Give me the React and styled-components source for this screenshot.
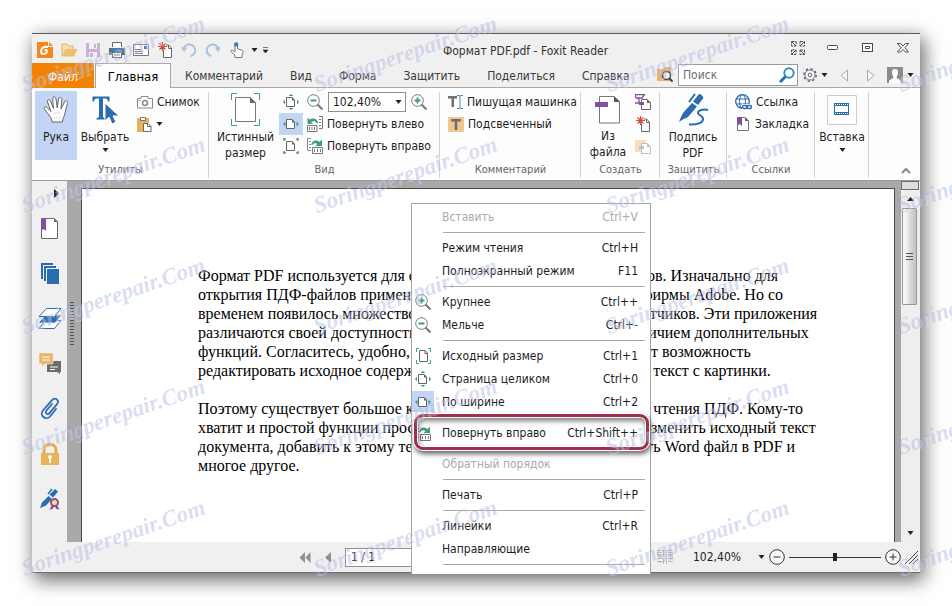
import { useState } from 'react'

import styled, { createGlobalStyle, css } from 'styled-components'

const GlobalStyle = createGlobalStyle`
  *, *::before, *::after {
    box-sizing: border-box;
  }

  body {
    margin: 0;
    background: #fff;
    font-family: 'DejaVu Sans Condensed', 'Noto Sans', sans-serif;
    font-size: 12px;
    line-height: 16px;
    color: #1e1e1e;
  }

  button, input, select {
    font: inherit;
    color: inherit;
    margin: 0;
    padding: 0;
    border: 0;
    border-radius: 0;
    background: none;
    outline: none;
  }

  svg {
    display: block;
    flex: none;
  }
`

const Desktop = styled.div`
  position: relative;
  display: flex;
  min-height: 100vh;
  padding: 33px 32px;
  overflow: hidden;
`

const Window = styled.main`
  position: relative;
  display: flex;
  flex-direction: column;
  flex: 1;
  min-width: 0;
  background: #f0f0f0;
  border-top: 1px solid #5f5a63;
  border-bottom: 1px solid #6d6a70;
  box-shadow: 3px 6px 18px 1px rgba(0, 0, 0, 0.6);
`

const TitleBar = styled.header`
  display: flex;
  align-items: flex-end;
  height: 29px;
`

const QuickAccess = styled.div`
  display: flex;
  align-items: center;
  padding-left: 1px;
`

const QuickButton = styled.button`
  display: flex;
  align-items: center;
  justify-content: center;
  width: ${props => (props.$narrow ? '11px' : '24px')};
  height: 26px;
`

const WindowTitle = styled.h1`
  flex: 1;
  margin: 0;
  font-size: 12px;
  font-weight: 400;
  line-height: 24px;
  text-align: center;
  color: #333;
`

const WindowButton = styled.button`
  display: flex;
  align-items: center;
  justify-content: center;
  width: 35px;
  height: 30px;
`

const TabBar = styled.nav`
  display: flex;
  height: 25px;
  border-bottom: 1px solid #a8a8a8;
`

const Tab = styled.button`
  height: 24px;
  padding: 2px 13px 0 14px;
  white-space: nowrap;
  color: #3a3a3a;

  ${props =>
    props.$file &&
    css`
      width: 62px;
      height: 25px;
      padding: 2px 0 0;
      margin-right: 1px;
      color: #fff;
      background: #f28200;
    `}

  ${props =>
    props.$active &&
    css`
      width: 76px;
      height: 25px;
      padding: 1px 0 0;
      font-size: 13px;
      color: #000;
      background: #fdfdfd;
      border: 1px solid #a8a8a8;
      border-bottom: 0;
    `}
`

const TabTools = styled.div`
  display: flex;
  align-items: center;
  gap: 5px;
  margin-left: auto;
  padding-right: 6px;
`

const SearchBox = styled.label`
  display: flex;
  align-items: center;
  width: 120px;
  height: 22px;
  padding: 0 2px 0 4px;
  background: #fff;
  border: 1px solid #9b9b9b;
`

const SearchInput = styled.input`
  flex: 1;
  min-width: 0;

  &::placeholder {
    color: #707070;
    opacity: 1;
  }
`

const IconButton = styled.button`
  display: flex;
  align-items: center;
  justify-content: center;
  gap: 4px;
  height: 22px;
  min-width: ${props => props.$width || 16}px;
  background: ${props => (props.$active ? '#c3d5f4' : 'none')};
`

const Ribbon = styled.section`
  display: flex;
  height: 92px;
  background: #fdfdfd;
`

const Group = styled.div`
  display: flex;
  flex-direction: column;
  flex: none;
  width: ${props => props.$width}px;
  padding-top: 3px;
  background: linear-gradient(#d2d2d2, #d2d2d2) right 4px / 1px 86px no-repeat;
`

const GroupBody = styled.div`
  display: flex;
  flex: 1;
  gap: ${props => props.$gap || 4}px;
  padding: 0 4px 0 ${props => props.$left || 6}px;
`

const GroupLabel = styled.div`
  height: 18px;
  line-height: 16px;
  font-size: 11px;
  text-align: center;
  color: #666;
`

const BigButton = styled.button`
  display: flex;
  flex-direction: column;
  align-items: center;
  gap: 3px;
  width: ${props => props.$width}px;
  height: 69px;
  padding-top: 2px;
  line-height: 16px;
  white-space: pre-line;
  background: ${props => (props.$active ? '#c3d5f4' : 'none')};
`

const BigIcon = styled.span`
  display: flex;
  align-items: center;
  justify-content: center;
  height: 33px;
`

const Stack = styled.div`
  display: flex;
  flex-direction: column;
  padding-left: ${props => props.$indent || 0}px;
`

const Row = styled.div`
  display: flex;
  align-items: center;
  gap: 5px;
  height: 22px;
`

const RowButton = styled.button`
  display: flex;
  align-items: center;
  gap: 4px;
  height: 22px;
  white-space: nowrap;
`

const ZoomSelect = styled.select`
  width: ${props => props.$width}px;
  height: 20px;
  padding-left: ${props => (props.$boxed ? '4px' : '16px')};
  appearance: none;
  background: ${props => (props.$boxed ? '#fff' : 'none')};
  border: ${props => (props.$boxed ? '1px solid #8f8f8f' : '0')};
`

const SelectWrap = styled.span`
  display: flex;
  align-items: center;

  svg {
    margin-left: ${props => (props.$boxed ? '-11px' : '-7px')};
    margin-right: ${props => (props.$boxed ? '4px' : '0')};
    pointer-events: none;
  }
`

const Collapse = styled.button`
  align-self: flex-end;
  margin-left: auto;
  padding: 6px 9px;
`

const Workspace = styled.div`
  display: flex;
  flex: 1;
  background: #a9a9a9;
  border-top: 1px solid #9a9a9a;
`

const SideBar = styled.aside`
  display: flex;
  flex-direction: column;
  width: 35px;
  background: #f0f0f0;
`

const SideButton = styled.button`
  display: flex;
  align-items: center;
  justify-content: center;
  height: ${props => (props.$toggle ? '25px' : '45px')};
  padding-left: ${props => (props.$toggle ? '14px' : '0')};
`

const Splitter = styled.div`
  display: flex;
  align-items: flex-start;
  justify-content: center;
  width: 14px;
  padding: 120px 5px 0 0;
`

const SplitterDots = styled.div`
  width: 4px;
  height: 44px;
  background: radial-gradient(#555 40%, transparent 45%) 0 0 / 2px 3px;
`

const Page = styled.article`
  flex: 1;
  min-width: 0;
  margin: 7px 6px 0 0;
  padding: 77px 60px 0 116px;
  background: #fff;
  border: 1px solid #4a4a4a;
  border-bottom: 0;
  font-family: 'Liberation Serif', serif;
  font-size: 16px;
  line-height: 19px;
  color: #000;
  overflow: hidden;
`

const Paragraph = styled.p`
  margin: 0 0 19px;
`

const Line = styled.span`
  display: block;
  white-space: nowrap;
`

const ScrollBar = styled.div`
  display: flex;
  flex-direction: column;
  width: 19px;
  padding-right: 1px;
  background: #eee;
`

const ScrollSplit = styled.div`
  height: 9px;
  background: #ddd;
  border: 1px solid #6c6c6c;
`

const ScrollArrow = styled.button`
  display: flex;
  align-items: center;
  justify-content: center;
  height: 18px;
`

const ScrollTrack = styled.div`
  flex: 1;
`

const ScrollThumb = styled.div`
  display: flex;
  align-items: center;
  justify-content: center;
  height: 97px;
  margin: 0 2px 0 1px;
  background: linear-gradient(90deg, #f5f5f5 20%, #d6d6d8 60%, #c2c2c6);
  border: 1px solid #979797;
  border-radius: 1px;
`

const StatusBar = styled.footer`
  display: flex;
  align-items: center;
  height: 30px;
  padding: 0 2px 0 262px;
`

const PageInput = styled.input`
  width: 90px;
  height: 19px;
  margin-left: 5px;
  padding-left: 5px;
  background: #fff;
  border: 1px solid #8f8f8f;
`

const StatusTools = styled.div`
  display: flex;
  align-items: center;
  gap: 4px;
  margin-left: auto;
`

const Slider = styled.input`
  width: 92px;
  height: 16px;
  appearance: none;
  background: linear-gradient(#333, #333) center / 100% 1px no-repeat;

  &::-webkit-slider-thumb {
    appearance: none;
    width: 4px;
    height: 8px;
    background: #222;
  }
`

const Menu = styled.div`
  position: absolute;
  top: 169px;
  left: 379px;
  display: flex;
  flex-direction: column;
  width: 240px;
  height: 371px;
  padding-top: 1px;
  background: #fff;
  border: 1px solid #a5a5a5;
  border-bottom: 0;
`

const MenuItem = styled.button`
  position: relative;
  display: flex;
  align-items: center;
  height: 23px;
  padding-right: 12px;
  white-space: nowrap;
  text-align: left;
  color: ${props => (props.disabled ? '#aaa' : '#1e1e1e')};
`

const MenuIcon = styled.span`
  display: flex;
  align-items: center;
  justify-content: center;
  width: 22px;
  height: 21px;
  margin: 0 8px 0 0;
  background: ${props => (props.$active ? '#c3d5f4' : 'none')};
`

const Shortcut = styled.span`
  margin-left: auto;
`

const Divider = styled.hr`
  width: 100%;
  height: 8px;
  margin: 0;
  border: 0;
  background: linear-gradient(#a8a8a8, #a8a8a8) 31px 4px / 202px 1px no-repeat;
  visibility: ${props => (props.$hidden ? 'hidden' : 'visible')};
`

const Highlight = styled.span`
  position: absolute;
  inset: -7px 1px -6px 2px;
  border: 3px solid #9c3149;
  border-radius: 9px;
  box-shadow: 0 0 0 1px #fff, 1px 3px 5px 1px rgba(0, 0, 0, 0.6),
    inset 0 0 0 1px #fff, inset 1px 3px 5px 1px rgba(0, 0, 0, 0.5);
  pointer-events: none;
`

const Watermarks = styled.div`
  position: absolute;
  inset: 0;
  display: grid;
  grid-template-columns: repeat(auto-fill, 292px);
  grid-auto-rows: 121px;
  width: calc(100% + 292px);
  padding: 71px 0 0 22px;
  pointer-events: none;
`

const Watermark = styled.span`
  height: 24px;
  font: italic 700 23px/24px 'Liberation Serif', serif;
  white-space: nowrap;
  color: rgba(150, 160, 215, 0.36);
  text-shadow: 1px 1px 0 rgba(255, 255, 255, 0.3);
  transform: rotate(-19deg);
  transform-origin: 8px 50%;
`

const GREEN = '#3f9d7c'
const BLUE = '#2b6cb0'
const GREY = '#6f6f6f'
const PURPLE = '#82509f'
const GOLD = '#e9b15c'

const Svg = ({ w, h = w, children, ...rest }) => (
  <svg width={w} height={h} viewBox={`0 0 ${w} ${h}`} fill='none' aria-hidden='true' {...rest}>
    {children}
  </svg>
)

const Caret = ({ up }) => (
  <Svg w={7} h={4}>
    <path d={up ? 'M0 4 3.5 0 7 4z' : 'M.5 0h6L3.5 4z'} fill='#222' />
  </Svg>
)

const FoxitIcon = () => (
  <Svg w={16}>
    <path d='M0 0h11v5h5v11H0z' fill='#f6861f' />
    <path d='M12 0l4 4h-4z' fill='#f6861f' />
    <path d='M11 5c-4-1-7 1-7 4.500 0 3 4 3.500 5.500 1 .7-1 .5-2-.5-2.500H7.500' stroke='#fff' strokeWidth='2' />
  </Svg>
)

const FolderIcon = () => (
  <Svg w={17} h={14}>
    <path d='M1 13V1h5l1.500 2H12v3' fill='#f6dcae' stroke={GOLD} />
    <path d='M1 13.500 4.500 6H16.500L13 13.500z' fill='#edbd70' />
  </Svg>
)

const SaveIcon = () => (
  <Svg w={14}>
    <path d='M0 0h14v14H0z' fill='#c9b2d6' />
    <path d='M3 0h8v6H3zM3 9h8v5H3z' fill='#f3edf6' />
    <path d='M8 1h2v4H8zM4 10h3v4H4z' fill='#c9b2d6' />
  </Svg>
)

const PrintIcon = () => (
  <Svg w={16}>
    <path d='M3.500 5V.5h9V5' fill='#fff' stroke='#666' />
    <path d='M0 6h16v7h-3v-2H3v2H0z' fill='#666' />
    <path d='M2 6h12v3H2z' fill='#3f7dc0' />
    <path d='M3.500 10.500h9v5h-9z' fill='#fff' stroke='#666' />
    <path d='M5 13h6' stroke='#3f7dc0' />
  </Svg>
)

const MailIcon = () => (
  <Svg w={16} h={12}>
    <path d='M.5.5h15v11H.5z' fill='#fff' stroke='#777' />
    <path d='M2 5.500h6M2 7.500h8M2 9.500h8' stroke='#777' />
    <path d='M11 2h3v3h-3z' fill='#3f7dc0' />
  </Svg>
)

const NewPageIcon = () => (
  <Svg w={15} h={16}>
    <path d='M5.500 8v7.500h8V6l-3-3H8M10.500 3v3.500h3' fill='#fff' stroke='#666' />
    <path d='M4.500 0v9M0 4.500h9M1.500 1.500l6 6M7.500 1.500l-6 6' stroke='#d2483a' strokeWidth='1.200' />
  </Svg>
)

const UndoIcon = ({ redo }) => (
  <Svg w={16} h={14}>
    <g transform={redo ? 'matrix(-1 0 0 1 16 0)' : undefined}>
      <path d='M2.500 6.500C3 3 6 1 9 1.500c4 .7 6 4 5 7.500-.6 2-2 3.500-4.500 4' stroke='#a9c3dc' strokeWidth='2' />
      <path d='M0 4.500h6.500L3 9z' fill='#a9c3dc' />
    </g>
  </Svg>
)

const TouchIcon = () => (
  <Svg w={14} h={16}>
    <path d='M5 8V2.500c0-2 2.500-2 2.500 0V7l4 1c1.500.4 1.800 1 1.500 2.500l-1 3V15.500H5V13L1 9.500c-.5-1 .8-1.800 1.600-1.200L5 10z' fill='#fff' stroke='#777' />
    <circle cx='6.2' cy='2.400' r='2.200' fill='#3f7dc0' />
  </Svg>
)

const CustomizeIcon = () => (
  <Svg w={5} h={6}>
    <path d='M0 .5h5M0 3h5L2.500 6z' fill='#222' stroke='#222' strokeWidth='.6' />
  </Svg>
)

const SkinIcon = () => (
  <Svg w={14}>
    <path d='M.5.500H5V5H.5zM9 .5h4.500V5H9zM.5 9H5v4.500H.5zM9 9h4.500v4.500H9z' stroke='#4a475b' strokeDasharray='3 1' />
    <path d='M1 1l4 4M13 1L9 5M1 13l4-4M13 13L9 9' stroke='#4a475b' />
  </Svg>
)

const MinimizeIcon = () => (
  <Svg w={12} h={6}>
    <rect x='.5' y='.5' width='10' height='4' rx='1' fill='#fff' stroke='#4a475b' />
  </Svg>
)

const RestoreIcon = () => (
  <Svg w={12} h={10}>
    <rect x='.5' y='.5' width='10' height='8' fill='#fff' stroke='#4a475b' />
    <path d='M3.500 3.500h4v2h-4z' stroke='#4a475b' />
  </Svg>
)

const CloseIcon = () => (
  <Svg w={12} h={10}>
    <path d='M.5.5h3L6 3 8.500.5h3L7.800 4.800l3.700 4.200h-3L6 6.500 3.500 9H.5l3.700-4.200z' fill='#fff' stroke='#4a475b' />
  </Svg>
)

const FolderSearchIcon = () => (
  <Svg w={16}>
    <path d='M0 2h6l2-2h6v14H0z' fill='#e8b25f' />
    <circle cx='9.500' cy='8.500' r='4' fill='#f4f4f4' stroke='#444' strokeWidth='1.500' />
    <path d='M12.500 11.500l3 3' stroke='#444' strokeWidth='2' />
  </Svg>
)

const SearchIcon = () => (
  <Svg w={16}>
    <circle cx='10' cy='6' r='4.700' stroke='#3a8fc0' strokeWidth='2' />
    <path d='M6.500 9.500L1 15' stroke='#2d6ea8' strokeWidth='3' />
  </Svg>
)

const GearIcon = () => (
  <Svg w={14}>
    <circle cx='7' cy='7' r='6.200' stroke='#4a475b' strokeWidth='1.200' strokeDasharray='2.400 2.400' />
    <circle cx='7' cy='7' r='5' fill='#f8f8f8' stroke='#4a475b' strokeWidth='.7' />
    <circle cx='7' cy='7' r='1.800' stroke='#4a475b' strokeWidth='.8' />
  </Svg>
)

const TriangleIcon = ({ next }) => (
  <Svg w={8} h={13}>
    <path d={next ? 'M.5 1l6.500 5.500L.5 12z' : 'M7.500 1L1 6.500 7.500 12z'} fill='#f8f8f8' stroke='#aaa' />
  </Svg>
)

const AvatarIcon = () => (
  <Svg w={16}>
    <path d='M0 0h16v16H0z' fill='#8b8b8b' />
    <path d='M8 2c2.500 0 3.500 2 3 4.500-.3 1.500-.8 2.300-1.300 3V11l4.300 2.500V16H2v-2.500L6.300 11V9.500C5.800 8.800 5.300 8 5 6.500 4.500 4 5.500 2 8 2z' fill='#fff' />
  </Svg>
)

const HandIcon = () => (
  <Svg w={27} h={27}>
    <path
      d='M9 26c0-3-1-4.500-3-7L1.600 13.500C.3 11.500 2 10 4 11.500l4 4L4.500 6C4 3.500 6.500 2.500 7.500 5l3 7.500L9.700 3C9.700.3 12.500.3 13 3l1.200 9L15.500 3c.5-2.500 3.500-2 3.300.5L18 13l3.500-7c1-2 3.800-1 3 1.500-1.500 4-2 8-3 11.500-.7 2.500-2 4-2 7z'
      fill='#fff'
      stroke='#666'
    />
    <path d='M10 18c2-1.500 6-1.500 8-.5M11 22h6' stroke='#d8d8d8' />
  </Svg>
)

const SelectTextIcon = () => (
  <Svg w={27} h={28}>
    <path d='M.5.500h17v5h-1.500c-.3-2-1-3-3-3h-2V20c0 1.500.7 2 2.500 2v1.500h-9V22c1.800 0 2.500-.5 2.500-2V2.500h-2c-2 0-2.700 1-3 3H.5z' fill={BLUE} />
    <path d='M13 7v18l4-4 3 7 4-2-3-6h6z' fill={BLUE} stroke='#fdfdfd' />
  </Svg>
)

const CameraIcon = () => (
  <Svg w={16} h={13}>
    <path d='M.5 2.500H4V.5h7v2h4.500v9.500H.5z' fill='#fff' stroke='#888' />
    <circle cx='8' cy='7' r='2.500' stroke='#888' strokeWidth='1.500' />
    <path d='M1.500 4.500h2' stroke='#888' />
  </Svg>
)

const ClipboardIcon = () => (
  <Svg w={15} h={16}>
    <path d='M0 2h12v5H6v9H0z' fill={GOLD} />
    <path d='M3.500 1.500h5v3h-5z' fill='#fff' stroke='#777' />
    <path d='M6.500 7.500h4.500l3 3v5H6.500z' fill='#fff' stroke='#666' />
    <path d='M10.500 7.500v3H14' stroke='#666' />
  </Svg>
)

const ActualSizeIcon = () => (
  <Svg w={29} h={33}>
    <path d='M.5 7V.500H6M23 .5h5.500V7M.5 26v6.500H6M23 32.500h5.500V26' stroke={GREEN} />
    <path d='M4.500 4.500H19l5.500 5.500v18.500h-20z' fill='#fff' stroke='#777' />
    <path d='M19 4v6h6z' fill='#666' />
  </Svg>
)

const MiniPage = ({ children }) => (
  <Svg w={16}>
    <path d='M3.500 3.500H9L11.500 6v6.500h-8z' fill='#fff' stroke='#666' />
    <path d='M9 3v3.500h3z' fill='#666' />
    {children}
  </Svg>
)

const FitPageIcon = () => (
  <MiniPage>
    <path d='M8 0l2.500 2h-5zM8 16l2.500-2h-5zM0 8l2-2.500v5zM16 8l-2-2.500v5z' fill={GREEN} />
  </MiniPage>
)

const FitWidthIcon = () => (
  <MiniPage>
    <path d='M0 8l2.500-2.500v5zM16 8l-2.500-2.500v5z' fill={GREEN} />
  </MiniPage>
)

const FitVisibleIcon = () => (
  <MiniPage>
    <path d='M0 0l1 3 2-2zM16 0l-1 3-2-2zM0 16l1-3 2 2zM16 16l-1-3-2 2z' fill={GREEN} stroke={GREEN} strokeWidth='.5' />
  </MiniPage>
)

const RealSizeIcon = () => (
  <Svg w={15} h={16}>
    <path d='M.5 4V.5H3M12 .5h2.500V4M.5 12v3.500H3M12 15.500h2.500V12' stroke={GREEN} />
    <path d='M3.500 2.500H9L11.500 5v8.500h-8zM9 2.500V5.500h2.500' fill='#fff' stroke='#666' />
  </Svg>
)

const MagnifierIcon = ({ plus }) => (
  <Svg w={16}>
    <circle cx='6.500' cy='6.500' r='5.800' fill='#fff' stroke='#777' />
    <path d='M10.500 10.500l5 5' stroke='#777' strokeWidth='2' />
    <path d={plus ? 'M6.500 3.500v6M3.500 6.500h6' : 'M3.500 6.500h6'} stroke={GREEN} strokeWidth='2' />
  </Svg>
)

const RotateIcon = ({ right }) => (
  <Svg w={16}>
    {right ? (
      <>
        <path d='M4 12.500H.5V.500H4M2 3.500h2M2 6.500h2M2 9.500h2' stroke='#888' />
        <path d='M4.500 7c0-4 4-6 8-3L15 1.500V8H8.500l2-2C8.500 4.500 6 5 5.500 7z' fill={GREEN} />
        <path d='M5.500 9.500h10v6h-10zM7.500 11v3M10.500 11v3M13.500 11v3' stroke='#777' />
      </>
    ) : (
      <>
        <path d='M12 .5h3.500v12H12M12 3.500h2M12 6.500h2M12 9.500h2' stroke='#777' />
        <path d='M11 7c0-4-5-6-8.500-3.500L.5 1.500V8H6L4 6c2-1.500 5-1 5.500 1z' fill={GREEN} />
        <path d='M.5 9.500h9.500v6H.5zM2.500 11v3M5 11v3M7.500 11v3' stroke='#777' />
      </>
    )}
  </Svg>
)

const TypewriterIcon = () => (
  <Svg w={15} h={14}>
    <path d='M0 1h9v2.500H6V12H3.500V3.500H0z' fill={GREY} />
    <path d='M9 .5h2l1 .5 1-.5h2M12 1v11.500M9 13.500h2l1-.5 1 .5h2' stroke='#3f8dd0' />
  </Svg>
)

const HighlightIcon = () => (
  <Svg w={16} h={15}>
    <path d='M0 0h16v15H0z' fill='#efc88e' />
    <path d='M3 2h10v2.500H9.300V13H6.700V4.500H3z' fill={GREY} />
  </Svg>
)

const FromFileIcon = () => (
  <Svg w={26} h={29}>
    <path d='M4.500 1.500H19l5.500 5.500v21h-20z' fill='#fff' stroke='#777' />
    <path d='M19 1v6h6z' fill='#555' />
    <path d='M0 7h13v5H0z' fill={PURPLE} />
  </Svg>
)

const ScanIcon = ({ faded }) => (
  <Svg w={16} opacity={faded ? 0.4 : 1}>
    {faded ? (
      <path d='M0 2h11v12H0z' fill={GOLD} />
    ) : (
      <path d='M.5 4V.5h9L7 4H1l3 1v4H0' stroke={PURPLE} strokeWidth='1.300' />
    )}
    <path d='M6.500 5.500H12L15.500 9v6.500h-9z' fill='#fff' stroke='#666' />
    <path d='M12 5v4h4z' fill='#666' />
    <path d='M4 8h5v3H4z' fill={PURPLE} />
  </Svg>
)

const SignIcon = () => (
  <Svg w={31} h={33}>
    <path d='M21 1c2 0 4 2 4.500 4L20 12l-5-3.500zM14 10l5 3.500-9 10.500-6 3-3 2 1.500-4L5 20z' fill={BLUE} />
    <path d='M17 1l-6 8' stroke={BLUE} strokeWidth='2' />
    <path d='M30 17c-5-1-10 0-10 3 0 2.500 5 2.500 5 6 0 4-6 6-14 5.500' stroke={BLUE} strokeWidth='2' />
  </Svg>
)

const LinkIcon = () => (
  <Svg w={17} h={16}>
    <circle cx='7.500' cy='7.500' r='6.800' fill='#fff' stroke={BLUE} strokeWidth='1.300' />
    <ellipse cx='7.500' cy='7.500' rx='3' ry='6.800' stroke={BLUE} />
    <path d='M1 5h13M1 10h13' stroke={BLUE} />
    <path d='M7 10h10v6H7z' fill='#fdfdfd' />
    <rect x='7.500' y='11.500' width='5' height='3' rx='1.500' stroke={BLUE} strokeWidth='1.300' />
    <rect x='11.500' y='11.500' width='5' height='3' rx='1.500' stroke={BLUE} strokeWidth='1.300' />
  </Svg>
)

const BookmarkIcon = () => (
  <Svg w={12} h={14}>
    <path d='M.5.500H8L11.500 4v9.500H.5z' fill='#fff' stroke='#777' />
    <path d='M8 0v4h4z' fill='#666' />
    <path d='M0 0h5v9L2.500 7 0 9z' fill={PURPLE} />
  </Svg>
)

const InsertIcon = () => (
  <Svg w={30}>
    <path d='M.5.500h29v29H.5z' fill='#fff' stroke='#ccc' />
    <path d='M7 8h15v12H7z' fill={BLUE} />
    <path d='M8 9.500h13M8 18.500h13' stroke='#fff' strokeDasharray='1 1' />
    <path d='M8 11h13v6H8z' fill='#fff' />
  </Svg>
)

const SideBookmarkIcon = () => (
  <Svg w={17} h={21}>
    <path d='M.5.500H13L16.500 4v16.500H.5z' fill='#fff' stroke='#666' />
    <path d='M13 0v4h4z' fill='#666' />
    <path d='M0 0h5v13l-2.500-2L0 13z' fill={PURPLE} />
  </Svg>
)

const PagesIcon = () => (
  <Svg w={18} h={21}>
    <path d='M1 16V1h11M4 18V4h11' stroke={BLUE} strokeWidth='2' />
    <path d='M6 6h12v15H6z' fill={BLUE} />
  </Svg>
)

const LayersIcon = () => (
  <Svg w={24} h={21}>
    <path d='M7.500 12.500H23L16.500 20.500H1z' fill='#fff' stroke={BLUE} />
    <path d='M8 7h16l-7 8H0z' fill={BLUE} stroke='#f0f0f0' strokeWidth='.8' />
    <path d='M8.500.500H23L16.500 8.500H1z' fill='#fff' stroke={BLUE} />
  </Svg>
)

const CommentsIcon = () => (
  <Svg w={22} h={21}>
    <path d='M8 8h14v11h-1v2l-3-2H8z' fill='#6d6d6d' />
    <path d='M0 0h14v11H6l-3 3v-3H0z' fill='#eab564' stroke='#f0f0f0' strokeWidth='.5' />
    <path d='M3 4h8M3 7h8M11 14h8M11 16.500h5' stroke='#fff' />
  </Svg>
)

const ClipIcon = () => (
  <Svg w={20} h={22}>
    <path
      d='M12 6L6.500 12.500c-2 2.500 1 5 3 2.700l7.500-9c3-4-2-7.500-5-4L3 12.500c-4 5 3 10.500 7 6l6-7.500'
      stroke={BLUE}
      strokeWidth='1.800'
      strokeLinecap='round'
    />
  </Svg>
)

const LockIcon = () => (
  <Svg w={18} h={22}>
    <path d='M3 11V7c0-7.500 12-7.500 12 0v4' stroke='#e5a94e' strokeWidth='3' />
    <path d='M0 10h18v12H0z' fill='#eab25a' />
    <path d='M9 12a2 2 0 0 1 1 3.700V20H8v-4.300A2 2 0 0 1 9 12z' fill='#fff' />
  </Svg>
)

const CertIcon = () => (
  <Svg w={20} h={22}>
    <path d='M15 1l3 2.500-5 6-3.500-3zM8.500 8l3.500 3-6 6.500L0 20l2-5.500z' fill={BLUE} />
    <path d='M12 1L8 6' stroke={BLUE} strokeWidth='1.500' />
    <path d='M12 17l-2.500 4.500 3-.5 2-3 2 3 3 .5-2.500-4.500z' fill={PURPLE} />
    <circle cx='14.500' cy='14.500' r='3.500' fill='#ffe26a' stroke={PURPLE} strokeWidth='2' />
  </Svg>
)

const PrevIcon = ({ first }) => (
  <Svg w={12} h={11}>
    <path
      d={first ? 'M6 0v11L.500 5.500zM11.500 0v11L6.500 5.500z' : 'M9 0v11L3 5.500z'}
      fill='#909090'
    />
  </Svg>
)

const LayoutIcon = () => (
  <Svg w={16}>
    <path d='M0 1.500h6.500V7H0M16 1.500H9.500V7H16M0 3.500h5M11 3.500h5M0 9.500h6.500V15M16 9.500H9.500V15M0 12.500h5M11 12.500h5M0 5.500h5M11 5.500h5' stroke='#b5b5b5' />
  </Svg>
)

const RoundIcon = ({ plus }) => (
  <Svg w={16}>
    <circle cx='8' cy='8' r='7.300' fill='#f8f8f8' stroke='#333' />
    <path d={plus ? 'M4.500 8h7M8 4.500v7' : 'M4.500 8h7'} stroke='#333' />
  </Svg>
)

const GripIcon = () => (
  <Svg w={13}>
    <path d='M0 13L13 0M4 13l9-9M8 13l5-5' stroke='#444' />
  </Svg>
)

const tabs = ['Комментарий', 'Вид', 'Форма', 'Защитить', 'Поделиться', 'Справка']

const paragraphs = [
  [
    'Формат PDF используется для сохранения электронных документов. Изначально для',
    'открытия ПДФ-файлов применялась только программа от самой фирмы Adobe. Но со',
    'временем появилось множество решений от независимых разработчиков. Эти приложения',
    'различаются своей доступностью (и платные и бесплатные) и наличием дополнительных',
    'функций. Согласитесь, удобно, когда программа вам предоставляет возможность',
    'редактировать исходное содержимое PDF или распознать нужный текст с картинки.'
  ],
  [
    'Поэтому существует большое количество полезных программ для чтения ПДФ. Кому-то',
    'хватит и простой функции просмотра, а кому-то нужно серьёзно изменить исходный текст',
    'документа, добавить к этому тексту внешний комментарий, сделать Word файл в PDF и',
    'многое другое.'
  ]
]

const menuItems = [
  { label: 'Вставить', keys: 'Ctrl+V', disabled: true },
  { divider: true },
  { label: 'Режим чтения', keys: 'Ctrl+H' },
  { label: 'Полноэкранный режим', keys: 'F11' },
  { divider: true },
  { label: 'Крупнее', keys: 'Ctrl++', icon: <MagnifierIcon plus /> },
  { label: 'Мельче', keys: 'Ctrl+-', icon: <MagnifierIcon /> },
  { divider: true },
  { label: 'Исходный размер', keys: 'Ctrl+1', icon: <RealSizeIcon /> },
  { label: 'Страница целиком', keys: 'Ctrl+0', icon: <FitPageIcon /> },
  { label: 'По ширине', keys: 'Ctrl+2', icon: <FitWidthIcon />, active: true },
  { divider: true, hidden: true },
  { label: 'Повернуть вправо', keys: 'Ctrl+Shift++', icon: <RotateIcon right />, highlighted: true },
  { divider: true, hidden: true },
  { label: 'Обратный порядок', disabled: true },
  { divider: true },
  { label: 'Печать', keys: 'Ctrl+P' },
  { divider: true },
  { label: 'Линейки', keys: 'Ctrl+R' },
  { label: 'Направляющие' },
  { divider: true }
]

const sideIcons = [
  ['Закладки', <SideBookmarkIcon />],
  ['Страницы', <PagesIcon />],
  ['Слои', <LayersIcon />],
  ['Комментарии', <CommentsIcon />],
  ['Вложения', <ClipIcon />],
  ['Безопасность', <LockIcon />],
  ['Подписи', <CertIcon />]
]

const quickIcons = [
  ['Foxit', <FoxitIcon />],
  ['Открыть', <FolderIcon />],
  ['Сохранить', <SaveIcon />],
  ['Печать', <PrintIcon />],
  ['Почта', <MailIcon />],
  ['Создать', <NewPageIcon />],
  ['Отменить', <UndoIcon />],
  ['Вернуть', <UndoIcon redo />],
  ['Касание', <TouchIcon />]
]

const ZoomPicker = ({ width, boxed }) => (
  <SelectWrap $boxed={boxed}>
    <ZoomSelect $width={width} $boxed={boxed} aria-label='Масштаб' defaultValue='102,40%'>
      <option>102,40%</option>
    </ZoomSelect>
    <Caret />
  </SelectWrap>
)

const RibbonPanel = () => (
  <Ribbon>
    <Group $width={177}>
      <GroupBody $left={3} $gap={2}>
        <BigButton $active $width={42}>
          <BigIcon><HandIcon /></BigIcon>
          Рука
        </BigButton>
        <BigButton $width={52}>
          <BigIcon><SelectTextIcon /></BigIcon>
          Выбрать
          <Caret />
        </BigButton>
        <Stack $indent={4}>
          <RowButton>
            <CameraIcon />
            Снимок
          </RowButton>
          <RowButton aria-label='Буфер обмена'>
            <ClipboardIcon />
            <Caret />
          </RowButton>
        </Stack>
      </GroupBody>
      <GroupLabel>Утилиты</GroupLabel>
    </Group>

    <Group $width={231}>
      <GroupBody $left={7}>
        <BigButton $width={59}>
          <BigIcon><ActualSizeIcon /></BigIcon>
          {'Истинный\nразмер'}
        </BigButton>
        <Stack>
          <IconButton $width={24} aria-label='Страница целиком'><FitPageIcon /></IconButton>
          <IconButton $width={24} $active aria-label='По ширине'><FitWidthIcon /></IconButton>
          <IconButton $width={24} aria-label='По видимой части'><FitVisibleIcon /></IconButton>
        </Stack>
        <Stack>
          <Row>
            <IconButton aria-label='Мельче'><MagnifierIcon /></IconButton>
            <ZoomPicker width={78} boxed />
            <IconButton aria-label='Крупнее'><MagnifierIcon plus /></IconButton>
          </Row>
          <RowButton>
            <RotateIcon />
            Повернуть влево
          </RowButton>
          <RowButton>
            <RotateIcon right />
            Повернуть вправо
          </RowButton>
        </Stack>
      </GroupBody>
      <GroupLabel>Вид</GroupLabel>
    </Group>

    <Group $width={141}>
      <GroupBody $left={8}>
        <Stack>
          <RowButton>
            <TypewriterIcon />
            Пишущая машинка
          </RowButton>
          <RowButton>
            <HighlightIcon />
            Подсвеченный
          </RowButton>
        </Stack>
      </GroupBody>
      <GroupLabel>Комментарий</GroupLabel>
    </Group>

    <Group $width={79}>
      <GroupBody>
        <BigButton $width={42}>
          <BigIcon><FromFileIcon /></BigIcon>
          {'Из\nфайла'}
        </BigButton>
        <Stack>
          <IconButton $width={20} aria-label='Со сканера'><ScanIcon /></IconButton>
          <IconButton $width={20} aria-label='Пустой'><NewPageIcon /></IconButton>
          <IconButton $width={20} aria-label='Из буфера'><ScanIcon faded /></IconButton>
        </Stack>
      </GroupBody>
      <GroupLabel>Создать</GroupLabel>
    </Group>

    <Group $width={67}>
      <GroupBody>
        <BigButton $width={54}>
          <BigIcon><SignIcon /></BigIcon>
          {'Подпись\nPDF'}
        </BigButton>
      </GroupBody>
      <GroupLabel>Защитить</GroupLabel>
    </Group>

    <Group $width={88}>
      <GroupBody $left={8}>
        <Stack>
          <RowButton>
            <LinkIcon />
            Ссылка
          </RowButton>
          <RowButton>
            <IconButton as='span'><BookmarkIcon /></IconButton>
            Закладка
          </RowButton>
        </Stack>
      </GroupBody>
      <GroupLabel>Ссылки</GroupLabel>
    </Group>

    <Group $width={54}>
      <GroupBody $left={4}>
        <BigButton $width={46}>
          <BigIcon><InsertIcon /></BigIcon>
          Вставка
          <Caret />
        </BigButton>
      </GroupBody>
    </Group>

    <Collapse aria-label='Свернуть ленту'>
      <Svg w={10} h={7}>
        <path d='M1 6l4-4 4 4' stroke='#888' strokeWidth='2' />
      </Svg>
    </Collapse>
  </Ribbon>
)

const ContextMenu = () => (
  <Menu role='menu'>
    {menuItems.map((item, index) =>
      item.divider ? (
        <Divider key={index} $hidden={item.hidden} />
      ) : (
        <MenuItem key={index} role='menuitem' disabled={item.disabled}>
          <MenuIcon $active={item.active}>{item.icon}</MenuIcon>
          {item.label}
          <Shortcut>{item.keys}</Shortcut>
          {item.highlighted && <Highlight />}
        </MenuItem>
      )
    )}
  </Menu>
)

export default function App () {
  const [zoom, setZoom] = useState(50)
  const [page, setPage] = useState('1 / 1')
  const [query, setQuery] = useState('')

  return (
    <Desktop>
      <GlobalStyle />
      <Window>
        <TitleBar>
          <QuickAccess>
            {quickIcons.map(([label, icon]) => (
              <QuickButton key={label} aria-label={label}>{icon}</QuickButton>
            ))}
            <QuickButton $narrow aria-label='Режим касания'><Caret /></QuickButton>
            <QuickButton $narrow aria-label='Настроить панель'><CustomizeIcon /></QuickButton>
          </QuickAccess>
          <WindowTitle>Формат PDF.pdf - Foxit Reader</WindowTitle>
          <WindowButton aria-label='Оформление'><SkinIcon /></WindowButton>
          <WindowButton aria-label='Свернуть'><MinimizeIcon /></WindowButton>
          <WindowButton aria-label='Развернуть'><RestoreIcon /></WindowButton>
          <WindowButton aria-label='Закрыть'><CloseIcon /></WindowButton>
        </TitleBar>

        <TabBar>
          <Tab $file>Файл</Tab>
          <Tab $active>Главная</Tab>
          {tabs.map(tab => (
            <Tab key={tab}>{tab}</Tab>
          ))}
          <TabTools>
            <FolderSearchIcon />
            <SearchBox>
              <SearchInput
                aria-label='Поиск'
                placeholder='Поиск'
                value={query}
                onChange={event => setQuery(event.target.value)}
              />
              <SearchIcon />
            </SearchBox>
            <IconButton aria-label='Параметры'><GearIcon /><Caret /></IconButton>
            <IconButton $width={22} aria-label='Назад'><TriangleIcon /></IconButton>
            <IconButton $width={22} aria-label='Вперёд'><TriangleIcon next /></IconButton>
            <IconButton aria-label='Профиль'><AvatarIcon /><Caret /></IconButton>
          </TabTools>
        </TabBar>

        <RibbonPanel />

        <Workspace>
          <SideBar>
            <SideButton $toggle aria-label='Развернуть панель'>
              <Svg w={5} h={9}>
                <path d='M0 0l5 4.500L0 9z' fill='#111' />
              </Svg>
            </SideButton>
            {sideIcons.map(([label, icon]) => (
              <SideButton key={label} aria-label={label}>{icon}</SideButton>
            ))}
          </SideBar>
          <Splitter>
            <SplitterDots />
          </Splitter>
          <Page>
            {paragraphs.map((lines, index) => (
              <Paragraph key={index}>
                {lines.map(line => (
                  <Line key={line}>{line}</Line>
                ))}
              </Paragraph>
            ))}
          </Page>
          <ScrollBar>
            <ScrollSplit />
            <ScrollArrow aria-label='Вверх'><Caret up /></ScrollArrow>
            <ScrollTrack>
              <ScrollThumb>
                <Svg w={7} h={8}>
                  <path d='M0 .5h7M0 3.500h7M0 6.500h7' stroke='#555' />
                </Svg>
              </ScrollThumb>
            </ScrollTrack>
            <ScrollArrow aria-label='Вниз'><Caret /></ScrollArrow>
          </ScrollBar>
        </Workspace>

        <StatusBar>
          <IconButton $width={22} aria-label='Первая страница'><PrevIcon first /></IconButton>
          <IconButton $width={24} aria-label='Предыдущая страница'><PrevIcon /></IconButton>
          <PageInput
            aria-label='Страница'
            value={page}
            onChange={event => setPage(event.target.value)}
          />
          <StatusTools>
            <LayoutIcon />
            <ZoomPicker width={88} />
            <IconButton aria-label='Уменьшить'><RoundIcon /></IconButton>
            <Slider
              type='range'
              aria-label='Масштаб страницы'
              value={zoom}
              onChange={event => setZoom(Number(event.target.value))}
            />
            <IconButton aria-label='Увеличить'><RoundIcon plus /></IconButton>
            <GripIcon />
          </StatusTools>
        </StatusBar>

        <ContextMenu />
      </Window>

      <Watermarks aria-hidden='true'>
        {Array.from({ length: 20 }, (_, index) => (
          <Watermark key={index}>Soringperepair.Com</Watermark>
        ))}
      </Watermarks>
    </Desktop>
  )
}
